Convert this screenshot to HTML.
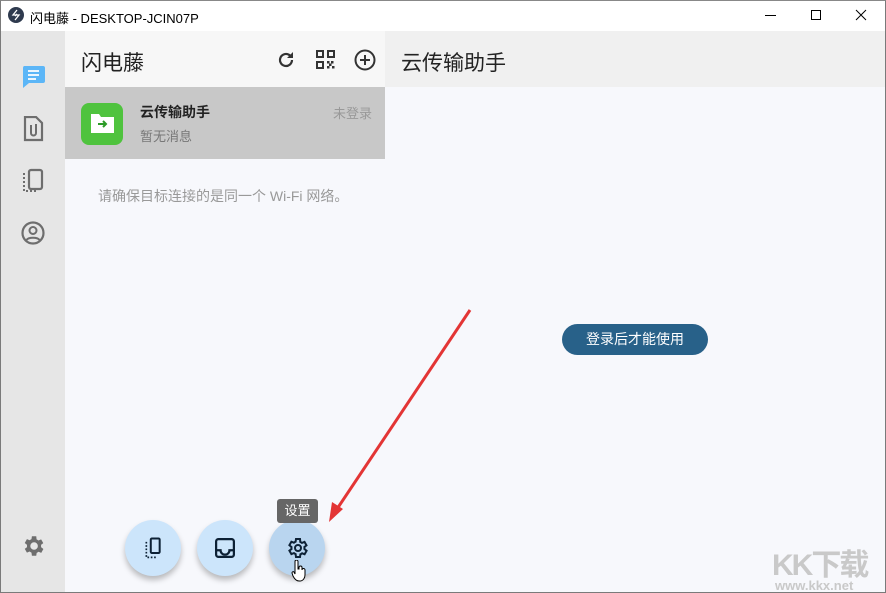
<!DOCTYPE html>
<html><head><meta charset="utf-8"><style>
*{margin:0;padding:0;box-sizing:border-box}
body{width:886px;height:593px;overflow:hidden;background:#f7f8fc;font-family:"Liberation Sans","Noto Sans CJK SC",sans-serif;position:relative}
.abs{position:absolute}
</style></head><body>
<div class="abs" style="left:0;top:0;width:886px;height:593px;border:1px solid #7a7a7a;border-top-color:#888;z-index:50;pointer-events:none"></div>
<div class="abs" style="left:0;top:0;width:886px;height:31px;background:#fff"></div>
<svg class="abs" style="left:8px;top:7px" width="16" height="16" viewBox="0 0 16 16"><circle cx="8" cy="8" r="8" fill="#2e3a4e"/><path d="M9 3L5 8h3l-1 1M7 13l4-5H8l1-1" stroke="#fff" stroke-width="1.3" fill="none"/></svg>
<div class="abs" style="left:30px;top:8px;font-size:13px;color:#000">闪电藤 - DESKTOP-JCIN07P</div>
<div class="abs" style="left:765px;top:15px;width:11px;height:1px;background:#000"></div>
<div class="abs" style="left:811px;top:10px;width:10px;height:10px;border:1px solid #000"></div>
<svg class="abs" style="left:855px;top:9px" width="12" height="12"><path d="M1 1L11 11M11 1L1 11" stroke="#000" stroke-width="1"/></svg>
<div class="abs" style="left:0;top:31px;width:65px;height:562px;background:#e6e6e6"></div>
<svg class="abs" style="left:21px;top:64px" width="25" height="25" viewBox="0 0 25 25"><path d="M3 2h19a2 2 0 0 1 2 2v13a2 2 0 0 1-2 2H8l-6 5V4a2 2 0 0 1 1-2z" fill="#5cb6f7"/><path d="M7 7h11M7 11h11M7 15h8" stroke="#fff" stroke-width="1.8"/></svg>
<svg class="abs" style="left:22px;top:116px" width="22" height="26" viewBox="0 0 22 26"><path d="M3 1h11l6 6v17H3z" fill="none" stroke="#6e6e6e" stroke-width="2.2"/><path d="M9 9v8a2.5 2.5 0 0 0 5 0V8" fill="none" stroke="#6e6e6e" stroke-width="2"/></svg>
<svg class="abs" style="left:22px;top:168px" width="22" height="26" viewBox="0 0 22 26"><rect x="7" y="2" width="13" height="19" rx="2" fill="none" stroke="#6e6e6e" stroke-width="2.2"/><path d="M2 5v18h13" fill="none" stroke="#6e6e6e" stroke-width="2" stroke-dasharray="2 2"/></svg>
<svg class="abs" style="left:21px;top:221px" width="24" height="24" viewBox="0 0 24 24"><circle cx="12" cy="12" r="10.5" fill="none" stroke="#6e6e6e" stroke-width="2.2"/><circle cx="12" cy="9.5" r="3.5" fill="none" stroke="#6e6e6e" stroke-width="2"/><path d="M5.5 19c2-3 11-3 13 0" fill="none" stroke="#6e6e6e" stroke-width="2"/></svg>
<svg class="abs" style="left:20px;top:533px" width="26" height="26" viewBox="0 0 24 24"><path fill="#6e6e6e" d="M19.4 13a7.5 7.5 0 0 0 0-2l2.1-1.6-2-3.5-2.5 1a7.5 7.5 0 0 0-1.7-1L15 3h-4l-.4 2.7a7.5 7.5 0 0 0-1.7 1l-2.5-1-2 3.5L6.5 11a7.5 7.5 0 0 0 0 2l-2.1 1.6 2 3.5 2.5-1a7.5 7.5 0 0 0 1.7 1L11 21h4l.4-2.7a7.5 7.5 0 0 0 1.7-1l2.5 1 2-3.5zM13 15.5a3.5 3.5 0 1 1 0-7 3.5 3.5 0 0 1 0 7z"/></svg>
<div class="abs" style="left:65px;top:31px;width:320px;height:56px;background:#f7f7f7"></div>
<div class="abs" style="left:81px;top:47px;font-size:21px;color:#222">闪电藤</div>
<svg class="abs" style="left:276px;top:50px" width="20" height="20" viewBox="0 0 20 20"><path d="M16 10a6 6 0 1 1-2-4.5" fill="none" stroke="#333" stroke-width="2.2"/><path d="M17 2v6h-6z" fill="#333"/></svg>
<svg class="abs" style="left:316px;top:50px" width="19" height="19" viewBox="0 0 19 19" fill="#333"><path d="M0 0h8v8H0zM2 2v4h4V2zM11 0h8v8h-8zM13 2v4h4V2zM0 11h8v8H0zM2 13v4h4v-4z"/><rect x="11" y="11" width="2.5" height="2.5"/><rect x="15" y="11" width="2.5" height="2.5"/><rect x="13" y="13.5" width="2.5" height="2.5"/><rect x="11" y="16" width="2.5" height="2.5"/><rect x="16" y="16" width="2.5" height="2.5"/></svg>
<svg class="abs" style="left:354px;top:49px" width="22" height="22" viewBox="0 0 22 22"><circle cx="11" cy="11" r="9.5" fill="none" stroke="#333" stroke-width="2"/><path d="M11 6v10M6 11h10" stroke="#333" stroke-width="2"/></svg>
<div class="abs" style="left:65px;top:87px;width:320px;height:72px;background:#c8c8c8"></div>
<div class="abs" style="left:81px;top:103px;width:42px;height:42px;border-radius:8px;background:#4fc33e"></div>
<svg class="abs" style="left:90px;top:112px" width="25" height="22" viewBox="0 0 25 22"><path d="M1 2h8l2 3h13v16H1z" fill="#fff"/><path d="M8 12h8M13 9l3 3-3 3" stroke="#2c9b27" stroke-width="2" fill="none"/></svg>
<div class="abs" style="left:140px;top:102px;font-size:14px;font-weight:bold;color:#222">云传输助手</div>
<div class="abs" style="left:140px;top:126px;font-size:13px;color:#777">暂无消息</div>
<div class="abs" style="left:333px;top:103px;font-size:13px;color:#999">未登录</div>
<div class="abs" style="left:98px;top:186px;font-size:14px;color:#999">请确保目标连接的是同一个 Wi-Fi 网络。</div>
<div class="abs" style="left:385px;top:31px;width:501px;height:56px;background:#f0f0f0"></div>
<div class="abs" style="left:401px;top:47px;font-size:21px;color:#222">云传输助手</div>
<div class="abs" style="left:562px;top:324px;width:146px;height:31px;border-radius:16px;background:#286189;color:#fff;font-size:14px;line-height:31px;text-align:center">登录后才能使用</div>
<svg class="abs" style="left:0;top:0" width="886" height="593"><path d="M470 310L337 509" stroke="#e33535" stroke-width="3"/><path d="M329 522l3-20 11 7z" fill="#e33535"/></svg>
<div class="abs" style="left:125px;top:520px;width:56px;height:56px;border-radius:50%;background:#cce5fb;box-shadow:0 4px 6px rgba(0,0,0,.25)"></div>
<div class="abs" style="left:197px;top:520px;width:56px;height:56px;border-radius:50%;background:#cce5fb;box-shadow:0 4px 6px rgba(0,0,0,.25)"></div>
<div class="abs" style="left:269px;top:520px;width:56px;height:56px;border-radius:50%;background:#b9d5ef;box-shadow:0 4px 6px rgba(0,0,0,.25)"></div>
<svg class="abs" style="left:143px;top:537px" width="20" height="23" viewBox="0 0 18 20"><rect x="7" y="1" width="8" height="13" rx="1" fill="none" stroke="#0d2135" stroke-width="1.8"/><path d="M3 4v14h9" fill="none" stroke="#0d2135" stroke-width="1.5" stroke-dasharray="1.5 1.5"/></svg>
<svg class="abs" style="left:215px;top:538px" width="20" height="20" viewBox="0 0 18 18"><rect x="1" y="1" width="16" height="16" rx="2" fill="none" stroke="#0d2135" stroke-width="2"/><path d="M1 11h4a4 4 0 0 0 8 0h4" fill="none" stroke="#0d2135" stroke-width="2"/></svg>
<svg class="abs" style="left:285px;top:536px" width="24" height="24" viewBox="0 0 24 24"><path fill="none" stroke="#0d2135" stroke-width="2" d="M19.4 13a7.5 7.5 0 0 0 0-2l2.1-1.6-2-3.5-2.5 1a7.5 7.5 0 0 0-1.7-1L15 3h-4l-.4 2.7a7.5 7.5 0 0 0-1.7 1l-2.5-1-2 3.5L6.5 11a7.5 7.5 0 0 0 0 2l-2.1 1.6 2 3.5 2.5-1a7.5 7.5 0 0 0 1.7 1L11 21h4l.4-2.7a7.5 7.5 0 0 0 1.7-1l2.5 1 2-3.5z"/><circle cx="13" cy="12" r="3" fill="none" stroke="#0d2135" stroke-width="2"/></svg>
<svg class="abs" style="left:291px;top:560px" width="16" height="22" viewBox="0 0 16 22"><path d="M4 1.5a1.5 1.5 0 0 1 3 0V9h1V7.5a1.5 1.5 0 0 1 3 0V10a1.5 1.5 0 0 1 3 0v5c0 3-2 6-5 6H8c-3 0-5-3-6-5l-1-3a1.2 1.2 0 0 1 2-1l1 2z" fill="#fff" stroke="#000" stroke-width="1"/></svg>
<div class="abs" style="left:277px;top:499px;width:41px;height:24px;border-radius:3px;background:#666;color:#fff;font-size:13px;line-height:24px;text-align:center">设置</div>
<div class="abs" style="left:772px;top:540px;font-size:30px;font-weight:bold;color:#c9c9c9;letter-spacing:-2px">KK下载</div>
<div class="abs" style="left:775px;top:578px;font-size:13px;font-weight:bold;color:#c9c9c9">www.kkx.net</div>
</body></html>
